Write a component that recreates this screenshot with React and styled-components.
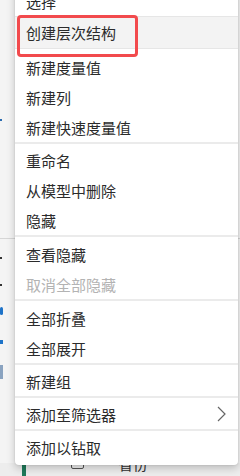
import React from "react";
import styled, { createGlobalStyle } from "styled-components";

const Global = createGlobalStyle`
  html, body { margin: 0; padding: 0; }
  body {
    background: #f4f4f4;
    font-family: "Noto Sans CJK SC", "Noto Sans", sans-serif;
  }
`;

const Page = styled.div`
  position: relative;
  width: 240px;
  height: 476px;
  overflow: hidden;
  background: #f4f4f4;
`;

const Pane = styled.div`
  display: flex;
  flex-direction: column;
  height: 100%;
`;

const PaneRow = styled.div`
  height: ${(p) => p.$h}px;
  flex: none;
  border-bottom: ${(p) => (p.$line ? "1px solid #d6d6d6" : "none")};
  display: flex;
  align-items: center;
`;

const Mark = styled.div`
  width: ${(p) => p.$w}px;
  height: ${(p) => p.$hh}px;
  background: ${(p) => p.$c};
  border-radius: ${(p) => p.$r || 0}px;
`;

const FieldRow = styled.div`
  flex: 1;
  display: flex;
  align-items: flex-start;
  background: #ededed;
  padding-left: 22px;
`;

const GreenBar = styled.div`
  width: 4px;
  align-self: stretch;
  background: #1f7a5a;
`;

const Check = styled.div`
  width: 13px;
  height: 13px;
  border: 1px solid #555;
  border-radius: 2px;
  margin-left: 45px;
  margin-top: -7px;
  box-sizing: border-box;
`;

const FieldText = styled.span`
  margin-left: 34px;
  font-size: 15px;
  line-height: 15px;
  color: #333;
  margin-top: -7px;
`;

const Menu = styled.div`
  position: absolute;
  left: 15px;
  top: -14px;
  width: 223px;
  background: #fff;
  border-radius: 0 0 4px 4px;
  box-shadow: 0 3px 8px rgba(0, 0, 0, 0.22), 0 0 2px rgba(0, 0, 0, 0.12);
  display: flex;
  flex-direction: column;
  padding-bottom: 3px;
`;

const Item = styled.div`
  box-sizing: border-box;
  height: ${(p) => (p.$hover ? 33 : 30)}px;
  margin-bottom: ${(p) => (p.$hover ? 3 : 0)}px;
  display: flex;
  align-items: center;
  justify-content: space-between;
  padding: 0 12px 0 11px;
  font-size: 15px;
  color: ${(p) => (p.$disabled ? "#b3b3b3" : "#2b2b2b")};
  background: ${(p) => (p.$hover ? "#f3f3f3" : "transparent")};
  border-top: ${(p) => (p.$hover ? "1px solid #e6e6e6" : "none")};
  border-bottom: ${(p) => (p.$hover ? "1px solid #e6e6e6" : "none")};
  white-space: nowrap;
`;

const Sep = styled.div`
  height: 2px;
  background: #ebebeb;
  margin-bottom: ${(p) => p.$after}px;
  flex: none;
`;

const Highlight = styled.div`
  position: absolute;
  left: 17px;
  top: 15px;
  width: 115px;
  height: 36px;
  border: 3px solid #f24a4d;
  border-radius: 4px;
  pointer-events: none;
`;

const Chevron = () => (
  <svg width="9" height="16" viewBox="0 0 9 16" fill="none">
    <path d="M1 1 L8 8 L1 15" stroke="#666" strokeWidth="1.2" />
  </svg>
);

const groups = [
  [
    { t: "选择" },
    { t: "创建层次结构", hover: true },
    { t: "新建度量值" },
    { t: "新建列" },
    { t: "新建快速度量值" },
  ],
  [{ t: "重命名" }, { t: "从模型中删除" }, { t: "隐藏" }],
  [{ t: "查看隐藏" }, { t: "取消全部隐藏", disabled: true }],
  [{ t: "全部折叠" }, { t: "全部展开" }],
  [{ t: "新建组" }],
  [{ t: "添加至筛选器", sub: true }],
  [{ t: "添加以钻取" }],
];

export default function App() {
  return (
    <Page>
      <Global />
      <Pane>
        <PaneRow $h={105} />
        <PaneRow $h={30}>
          <Mark $w={2} $hh={2} $c="#2b6cb0" />
        </PaneRow>
        <PaneRow $h={103} $line />
        <PaneRow $h={38}>
          <Mark $w={2} $hh={2} $c="#333" />
        </PaneRow>
        <PaneRow $h={16}>
          <Mark $w={2} $hh={2} $c="#333" />
        </PaneRow>
        <PaneRow $h={36}>
          <Mark $w={3} $hh={8} $c="#1e73c8" $r={3} />
        </PaneRow>
        <PaneRow $h={26}>
          <Mark $w={3} $hh={4} $c="#1e73c8" />
        </PaneRow>
        <PaneRow $h={34}>
          <Mark $w={3} $hh={14} $c="#8aa3c0" />
        </PaneRow>
        <PaneRow $h={74} />
        <FieldRow>
          <GreenBar />
          <Check />
          <FieldText>省份</FieldText>
        </FieldRow>
      </Pane>
      <Menu>
        {groups.map((g, gi) => (
          <React.Fragment key={gi}>
            {gi > 0 && <Sep $after={gi === 2 || gi === 3 ? 2 : 1} />}
            {g.map((it) => (
              <Item key={it.t} $hover={it.hover} $disabled={it.disabled}>
                <span>{it.t}</span>
                {it.sub && <Chevron />}
              </Item>
            ))}
          </React.Fragment>
        ))}
      </Menu>
      <Highlight />
    </Page>
  );
}
